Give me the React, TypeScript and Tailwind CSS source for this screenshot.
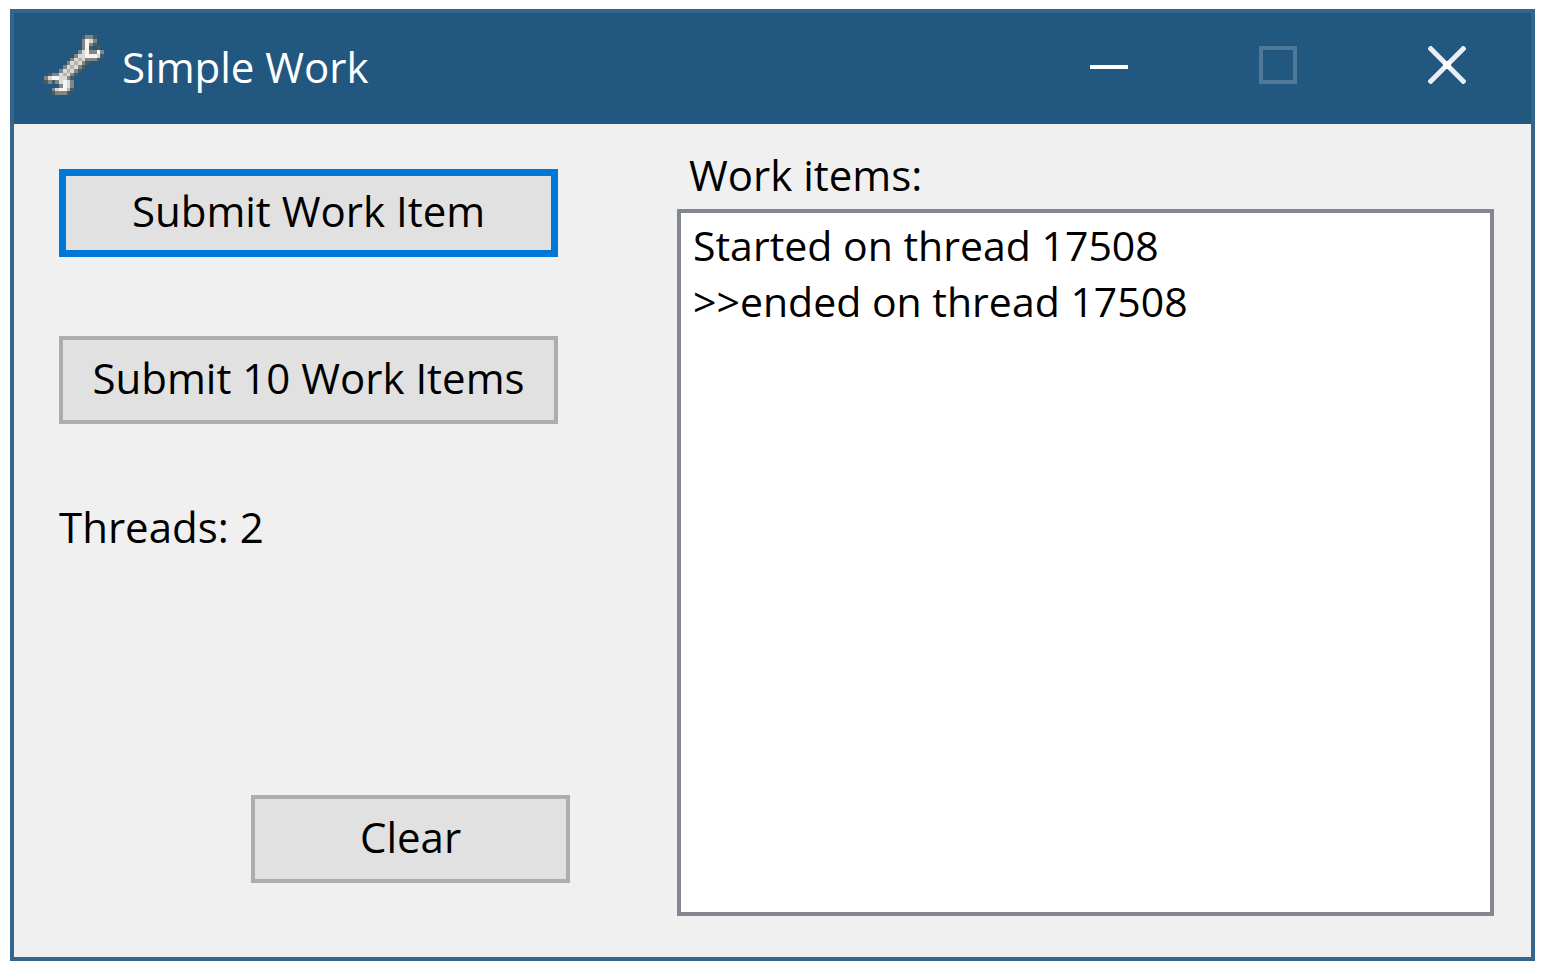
import { useState } from "react";

const LEVELS: Record<string, string> = {
  d: "#4b5a60",
  m: "#7f8684",
  g: "#b5b5b0",
  l: "#d9dad7",
  w: "#f5f6f4",
};

// 16x16 wrench, one letter per cell, "." is empty
const WRENCH = [
  "..........dmmd..",
  "..........mwlm..",
  "..........mwmd..",
  "..........mwd.d.",
  ".........mlwmmwm",
  "........mllwwwld",
  ".......mlglmmmd.",
  "......mlglmd....",
  ".....mlglmd.....",
  "....mlglmd......",
  ".dmmlglmd.......",
  "mlwwllmd........",
  "dmdmlwlm........",
  "....mwlm........",
  "..mlwwgd........",
  "..dmmmd.........",
];

function WrenchIcon() {
  return (
    <svg viewBox="0 0 16 16" className="h-[60px] w-[60px] shrink-0" shapeRendering="crispEdges" aria-hidden>
      {WRENCH.flatMap((row, y) =>
        [...row].map((cell, x) =>
          cell === "." ? null : (
            <rect key={`${x}-${y}`} x={x} y={y} width={1} height={1} fill={LEVELS[cell]} />
          ),
        ),
      )}
    </svg>
  );
}

const captionButton = "flex h-full w-[169px] items-center justify-center";

const formButton =
  "flex h-[88px] items-center justify-center border-4 border-[#adadad] bg-[#e1e1e1] pb-1 focus:outline-none";

export default function App() {
  const [items, setItems] = useState(["Started on thread 17508", ">>ended on thread 17508"]);

  const submit = (count: number) =>
    setItems((prev) => [...prev, ...Array.from({ length: count }, () => "Started on thread 17508")]);

  return (
    <div className="flex min-h-screen bg-white pt-[9px] pr-[9px] pb-[7px] pl-[10px] font-['Open_Sans','Noto_Sans',sans-serif] text-[42px] leading-[56px] text-black">
      <div className="flex flex-1 flex-col border-4 border-[#34658c]">
        <header className="flex h-[111px] items-center bg-[#22577f] pb-[7px] pl-[30px] text-white">
          <WrenchIcon />
          <h1 className="flex-1 pt-1 pl-[18px]">Simple Work</h1>
          <button type="button" aria-label="Minimize" className={captionButton}>
            <svg viewBox="0 0 38 38" className="h-[38px] w-[38px]" aria-hidden>
              <path d="M0 21h38" stroke="#fff" strokeWidth="4" />
            </svg>
          </button>
          <button type="button" disabled aria-label="Maximize" className={captionButton}>
            <svg viewBox="0 0 38 38" className="h-[38px] w-[38px]" aria-hidden>
              <path d="M2 2h34v34H2z" fill="none" stroke="#4e7999" strokeWidth="4" />
            </svg>
          </button>
          <button type="button" aria-label="Close" className={captionButton}>
            <svg viewBox="0 0 38 38" className="h-[38px] w-[38px]" aria-hidden>
              <path d="M1 1l36 36M37 1L1 37" stroke="#e9eef3" strokeWidth="5" />
              <path d="M15 15h8v8h-8z" fill="#fff" />
            </svg>
          </button>
        </header>

        <main className="flex flex-1 gap-[107px] bg-[#f0f0f0] pr-[37px] pb-[41px] pl-[45px]">
          <div className="flex w-[511px] flex-col pt-[45px] pb-[33px]">
            <button
              type="button"
              onClick={() => submit(1)}
              className="mr-3 flex h-[88px] items-center justify-center border-[7px] border-[#0078d7] bg-[#e1e1e1] pb-1 focus:outline-none"
            >
              Submit Work Item
            </button>
            <button type="button" onClick={() => submit(10)} className={`${formButton} mt-[79px] mr-3`}>
              Submit 10 Work Items
            </button>
            <p className="mt-[75px]">Threads: 2</p>
            <button type="button" onClick={() => setItems([])} className={`${formButton} mt-auto w-[319px] self-end`}>
              Clear
            </button>
          </div>

          <div className="flex flex-1 flex-col pt-[23px]">
            <label htmlFor="work-items" className="mb-[6px] pl-3">
              Work items:
            </label>
            <select
              id="work-items"
              size={2}
              className="w-full flex-1 appearance-none overflow-hidden rounded-none border-4 border-[#828790] bg-white px-3 py-1 focus:outline-none"
            >
              {items.map((item, i) => (
                <option key={i} className="h-14 p-0 text-[41px] leading-[56px]">
                  {item}
                </option>
              ))}
            </select>
          </div>
        </main>
      </div>
    </div>
  );
}
